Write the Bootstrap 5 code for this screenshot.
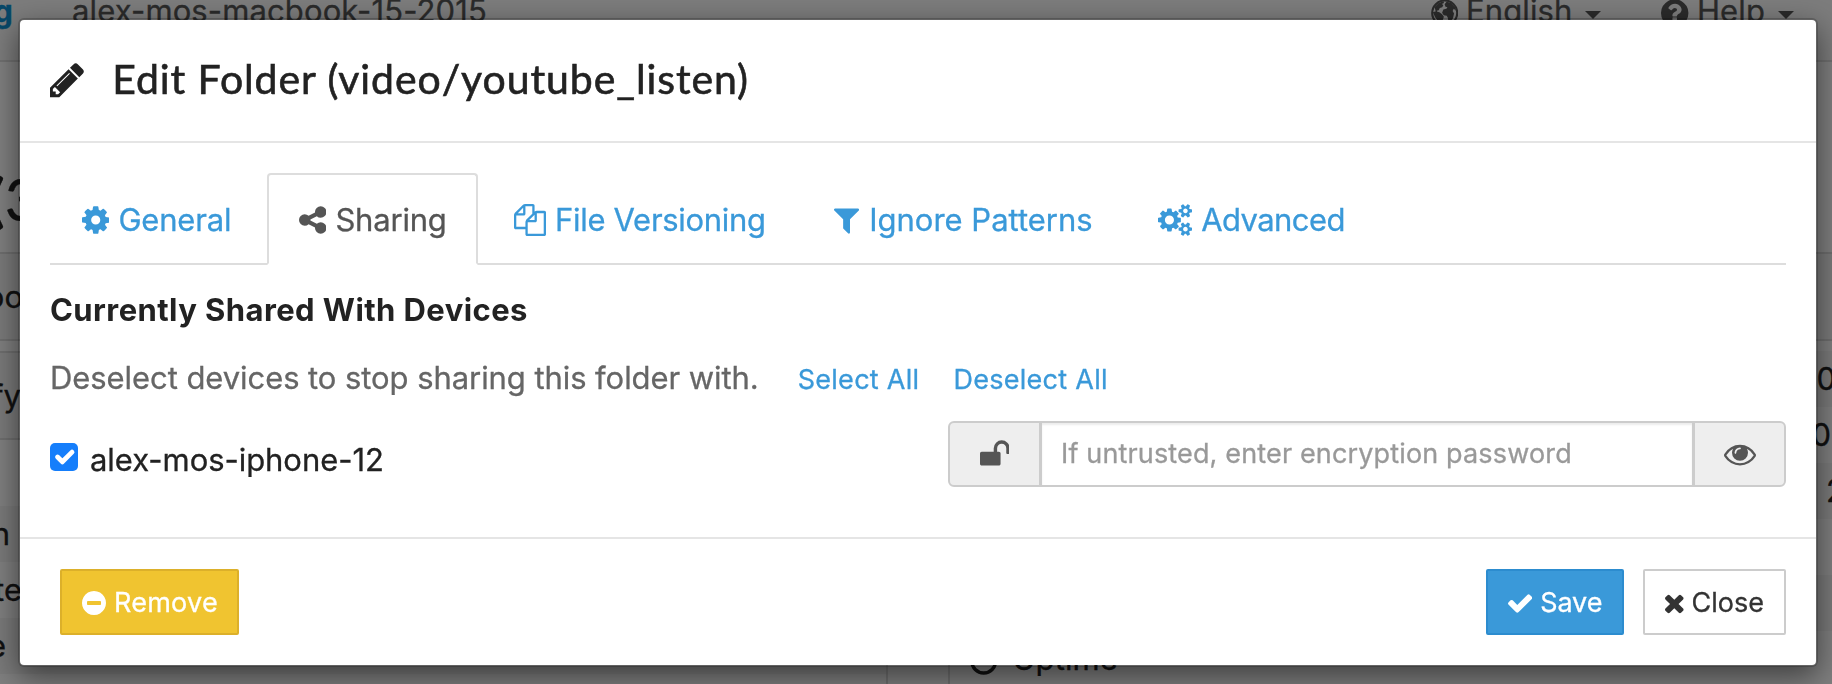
<!DOCTYPE html>
<html lang="en">
<head>
<meta charset="utf-8">
<title>Edit Folder</title>
<link href="https://cdn.jsdelivr.net/npm/bootstrap@5.3.0/dist/css/bootstrap.min.css" rel="stylesheet">
<style>
  :root { --blue: #3a99d9; --ink: #222; }
  body { font: 31px/46px Inter, "Liberation Sans", sans-serif; color: var(--ink); background: #fff; overflow: hidden; height: 684px; -webkit-text-stroke: .3px currentColor; }
  .ico { display: block; height: 32px; fill: currentColor; flex: none; }

  /* page behind the dialog */
  .page { height: 684px; overflow: hidden; }
  .topbar { height: 106px; margin-top: -44px; padding-top: 6px; background: #f8f8f8; border-bottom: 2px solid #e0e0e0; color: #555; white-space: nowrap; letter-spacing: .12px; }
  .caret { border: 8px solid transparent; border-top-color: currentColor; border-bottom: 0; margin: 8px 0 0 13px; }
  .peek { display: flex; justify-content: flex-end; white-space: pre; flex: none; }
  .brand { width: 13px; margin-right: 59px; color: #0d8fd0; font-weight: 700; }
  .menu-lang { margin-right: 60px; }
  .menu-help { margin-right: 38px; }
  .heading { height: 190px; padding-top: 107px; font: 500 57px/60px Lato, sans-serif; }
  .col-left { width: 888px; flex: none; border-right: 2px solid #ddd; }
  .col-right { width: 950px; flex: none; margin-left: 60px; border-left: 2px solid #ddd; }
  .strip { height: 89px; background: #f5f5f5; border: solid #ddd; border-width: 2px 0; padding-top: 20px; }
  .line { height: 56px; padding-top: 5px; white-space: pre; }
  .line.odd { background: #f5f5f5; }

  /* dialog */
  .modal-backdrop { --bs-backdrop-opacity: .5; }
  .modal-dialog { max-width: 1800px; margin: 18px 0 0 18px; }
  .modal-content { border: 2px solid rgba(0,0,0,.2); border-radius: 6px; background-clip: padding-box; box-shadow: 0 10px 30px rgba(0,0,0,.5); color: var(--ink); }
  .modal-header { height: 123px; padding: 28px 30px 33px; border-bottom: 2px solid #e5e5e5; border-radius: 0; justify-content: flex-start; }
  .modal-header .ico { height: 40px; margin-top: 4px; }
  .modal-title { font: 400 41px/60px Lato, sans-serif; letter-spacing: .9px; margin-left: 28px; padding-top: 1px; -webkit-text-stroke: .6px currentColor; }
  .modal-body { padding: 30px 30px 50px; }
  .nav-tabs { border-bottom: 2px solid #ddd; gap: 4px; flex-wrap: nowrap; }
  .nav-tabs .nav-link { display: flex; align-items: center; gap: 9px; height: 92px; padding: 1px 0 0 30px; border-width: 2px; margin-bottom: -2px; border-radius: 4px 4px 0 0; color: var(--blue); white-space: nowrap; letter-spacing: -.2px; }
  .nav-tabs .nav-link.active { color: #555; border-color: #ddd #ddd #fff; }
  .t-general { width: 213px; } .t-sharing { width: 211px; } .t-files { width: 316px; } .t-ignore { width: 320px; } .t-adv { width: 250px; }
  .nav-tabs .t-files .nav-link { letter-spacing: -.3px; }
  .nav-tabs .t-ignore .nav-link { letter-spacing: 0; gap: 10px; }
  .nav-tabs .t-adv .nav-link { letter-spacing: -.6px; }
  .section { font-weight: 700; letter-spacing: .42px; margin: 22px 0 21px; -webkit-text-stroke: 0; }
  .hint-row { height: 46px; padding-top: 1px; }
  .hint { color: #666; letter-spacing: -.07px; }
  .act { color: var(--blue); text-decoration: none; font-size: 27px; letter-spacing: .28px; }
  .dev { margin-top: 21px; height: 66px; }
  .dev .form-check-input { width: 28px; height: 28px; margin: 6px 12px 0 0; border: 0; border-radius: 5px; background-color: #157efb; background-size: 115%; }
  .dev label { letter-spacing: -.05px; }
  .input-group { width: 838px; height: 66px; }
  .input-group-text { width: 93px; justify-content: center; background: #eee; color: #555; border: 2px solid #ccc; border-radius: 6px; padding: 0; }
  .input-group .form-control { font-size: 27px; letter-spacing: .15px; border: 2px solid #ccc; padding: 1px 18px 0 19px; box-shadow: inset 0 2px 2px rgba(0,0,0,.075); }
  .form-control::placeholder { color: #999; }
  .modal-footer { height: 128px; padding: 30px; border-top: 2px solid #e5e5e5; }
  .modal-footer > * { margin: 0; }
  .modal-footer .btn { height: 66px; border-width: 2px; border-radius: 2px; padding: 2px 0 0 20px; display: flex; align-items: center; gap: 8px; font-size: 27px; -webkit-text-stroke: .3px currentColor; }
  .modal-footer .ico { height: 28px; }
  .btn-remove { width: 179px; margin-left: 10px; background: #f0c430; border-color: #dcb02a; color: #fff; letter-spacing: .25px; }
  .btn-save { width: 138px; margin-left: auto; margin-right: 19px; background: var(--blue); border-color: #2c8ccf; color: #fff; letter-spacing: -.1px; }
  .btn-dismiss { width: 143px; background: #fff; border-color: #ccc; color: #333; }
</style>
</head>
<body>

<div class="page">
  <div class="topbar d-flex align-items-center">
    <div class="peek brand">syncthing</div>
    <div class="me-auto">alex-mos-macbook-15-2015</div>
    <div class="d-flex align-items-center menu-lang">
      <svg class="ico mt-1" viewBox="128 0 1536 1792"><circle cx="896" cy="896" r="700" fill="none" stroke="currentColor" stroke-width="120"/><path d="M330 560l230-230 260-90 40 90-130 60 90 60-60 130-140 40-60 120-110 30 60 110-110-20zM230 860l170-60 200 60 150 110 100 130-60 190-90 80-40 200-110 30-60-280-130-190zM1000 260l240 60 230 250 60 200-130-110-60 120 80 150-60 260-150 230-100-10-40-250-60-110-170-30-90-140 70-180 170-40 60-90-110-30-50-140z"/></svg>
      <span class="ms-2">English</span><span class="caret"></span>
    </div>
    <div class="d-flex align-items-center menu-help">
      <svg class="ico mt-1" viewBox="128 0 1536 1792"><path d="M1024 1376v-192q0-14-9-23t-23-9h-192q-14 0-23 9t-9 23v192q0 14 9 23t23 9h192q14 0 23-9t9-23zm256-672q0-88-55.5-163t-138.5-116-170-41q-243 0-371 213-15 24 8 42l132 100q7 6 19 6 16 0 25-12 53-68 86-92 34-24 86-24 48 0 85.5 26t37.5 59q0 38-20 61t-68 45q-63 28-115.5 86.5t-52.5 125.5v36q0 14 9 23t23 9h192q14 0 23-9t9-23q0-19 21.5-49.5t54.5-49.5q32-18 49-28.5t46-35 44.5-48 28-60.5 12.5-81zm384 192q0 209-103 385.5t-279.5 279.5-385.5 103-385.5-103-279.5-279.5-103-385.5 103-385.5 279.5-279.5 385.5-103 385.5 103 279.5 279.5 103 385.5z"/></svg>
      <span class="ms-2">Help</span><span class="caret"></span>
    </div>
  </div>
  <div class="heading"><div class="peek" style="width:38px">(3</div></div>
  <div class="d-flex">
    <div class="col-left">
      <div class="strip"><div class="peek" style="width:23px">oo</div></div>
      <div class="strip" style="margin-top:10px"><div class="peek" style="width:21px">fy</div></div>
      <div class="line" style="height:66px"></div>
      <div class="line odd"><div class="peek" style="width:10px">n</div></div>
      <div class="line"><div class="peek" style="width:22px">te</div></div>
      <div class="line odd"><div class="peek" style="width:6px">e</div></div>
    </div>
    <div class="col-right">
      <div class="strip"></div>
      <div class="line" style="height:10px"></div>
      <div class="line odd"><div class="peek" style="width:886px">0</div></div>
      <div class="line"><div class="peek" style="width:881px">0</div></div>
      <div class="line odd"><div class="peek" style="width:895px">n 2</div></div>
      <div class="line"></div>
      <div class="line odd"></div>
      <div class="line d-flex">
        <svg class="ico" style="margin:9px 15px 0 20px" viewBox="128 0 1536 1792"><circle cx="896" cy="896" r="670" fill="none" stroke="currentColor" stroke-width="190"/><path d="M832 512h128v512H640V896h192z"/></svg>
        <span style="letter-spacing:.1px">Uptime</span>
      </div>
    </div>
  </div>
</div>

<div class="modal-backdrop show"></div>

<div class="modal d-block" tabindex="-1" style="overflow:hidden">
  <div class="modal-dialog">
    <div class="modal-content">
      <div class="modal-header">
        <svg class="ico" viewBox="128 0 1536 1792"><path d="M491 1536l91-91-235-235-91 91v107h128v128h107zm523-928q0-22-22-22-10 0-17 7l-542 542q-7 7-7 17 0 22 22 22 10 0 17-7l542-542q7-7 7-17zm-54-192l416 416-832 832h-416v-416zm683 96q0 53-37 90l-166 166-416-416 166-165q36-38 90-38 53 0 91 38l235 234q37 39 37 91z"/></svg>
        <h4 class="modal-title">Edit Folder (video/youtube_listen)</h4>
      </div>
      <div class="modal-body">
        <ul class="nav nav-tabs">
          <li class="nav-item t-general"><a class="nav-link"><svg class="ico" viewBox="128 0 1536 1792"><path d="M1152 896q0-106-75-181t-181-75-181 75-75 181 75 181 181 75 181-75 75-181zm512-109v222q0 12-8 23t-20 13l-185 28q-19 54-39 91 35 50 107 138 10 12 10 25t-9 23q-27 37-99 108t-94 71q-12 0-26-9l-138-108q-44 23-91 38-16 136-29 186-7 28-36 28h-222q-14 0-24.500-8.500t-11.500-21.500l-28-184q-49-16-90-37l-141 107q-10 9-25 9-14 0-25-11-126-114-165-168-7-10-7-23 0-12 8-23 15-21 51-66.500t54-70.500q-27-50-41-99l-183-27q-13-2-21-12.500t-8-23.500v-222q0-12 8-23t19-13l186-28q14-46 39-92-40-57-107-138-10-12-10-24 0-10 9-23 26-36 98.500-107.500t94.500-71.500q13 0 26 10l138 107q44-23 91-38 16-136 29-186 7-28 36-28h222q14 0 24.500 8.500t11.500 21.500l28 184q49 16 90 37l142-107q9-9 24-9 13 0 25 10 129 119 165 170 7 8 7 22 0 12-8 23-15 21-51 66.500t-54 70.500q26 50 41 98l183 28q13 2 21 12.500t8 23.500z"/></svg>General</a></li>
          <li class="nav-item t-sharing"><a class="nav-link active"><svg class="ico" viewBox="128 0 1536 1792"><path d="M1344 1024q133 0 226.500 93.500t93.500 226.500-93.500 226.500-226.500 93.500-226.500-93.500-93.500-226.500q0-12 2-34l-360-180q-92 86-218 86-133 0-226.500-93.500t-93.500-226.500 93.500-226.500 226.500-93.500q126 0 218 86l360-180q-2-22-2-34 0-133 93.500-226.500t226.500-93.500 226.500 93.500 93.500 226.500-93.500 226.500-226.500 93.500q-126 0-218-86l-360 180q2 22 2 34t-2 34l360 180q92-86 218-86z"/></svg>Sharing</a></li>
          <li class="nav-item t-files"><a class="nav-link"><svg class="ico" viewBox="0 0 1792 1792"><path d="M1696 384q40 0 68 28t28 68v1216q0 40-28 68t-68 28h-960q-40 0-68-28t-28-68v-288h-544q-40 0-68-28t-28-68v-672q0-40 20-88t48-76l408-408q28-28 76-48t88-20h416q40 0 68 28t28 68v328q68-40 128-40h416zm-544 213l-299 299h299v-299zm-640-384l-299 299h299v-299zm196 647l316-316v-416h-384v416q0 40-28 68t-68 28h-416v640h512v-256q0-40 20-88t48-76zm956 804v-1152h-384v416q0 40-28 68t-68 28h-416v640h896z"/></svg>File Versioning</a></li>
          <li class="nav-item t-ignore"><a class="nav-link"><svg class="ico" viewBox="192 0 1408 1792"><path d="M1595 295q17 41-14 70l-493 493v742q0 42-39 59-13 5-25 5-27 0-45-19l-256-256q-19-19-19-45v-486l-493-493q-31-29-14-70 17-39 59-39h1280q42 0 59 39z"/></svg>Ignore Patterns</a></li>
          <li class="nav-item t-adv"><a class="nav-link"><svg class="ico" viewBox="-64 0 1920 1792"><path d="M832 896q0-106-75-181t-181-75-181 75-75 181 75 181 181 75 181-75 75-181zm768 512q0-52-38-90t-90-38-90 38-38 90q0 53 37.500 90.500t90.500 37.500 90.500-37.500 37.500-90.500zm0-1024q0-52-38-90t-90-38-90 38-38 90q0 53 37.500 90.500t90.500 37.500 90.500-37.500 37.500-90.500zm-384 421v185q0 10-7 19.500t-16 10.500l-155 24q-11 35-32 76 34 48 90 115 7 11 7 20 0 12-7 19-23 30-82.500 89.500t-78.500 59.500q-11 0-21-7l-115-90q-37 19-77 31-11 108-23 155-7 24-30 24h-186q-11 0-20-7.500t-10-17.500l-23-153q-34-10-75-31l-118 89q-7 7-20 7-11 0-21-8-144-133-144-160 0-9 7-19 10-14 41-53t47-61q-23-44-35-82l-152-24q-10-1-17-9.500t-7-19.500v-185q0-10 7-19.500t16-10.500l155-24q11-35 32-76-34-48-90-115-7-11-7-20 0-12 7-20 22-30 82-89t79-59q11 0 21 7l115 90q34-18 77-32 11-108 23-154 7-24 30-24h186q11 0 20 7.500t10 17.500l23 153q34 10 75 31l118-89q8-7 20-7 11 0 21 8 144 133 144 160 0 8-7 19-12 16-42 54t-45 60q23 48 34 82l152 23q10 2 17 10.500t7 19.500zm640 533v140q0 16-149 31-12 27-30 52 51 113 51 138 0 4-4 7-122 71-124 71-8 0-46-47t-52-68q-20 2-30 2t-30-2q-14 21-52 68t-46 47q-2 0-124-71-4-3-4-7 0-25 51-138-18-25-30-52-149-15-149-31v-140q0-16 149-31 13-29 30-52-51-113-51-138 0-4 4-7 4-2 35-20t59-34 30-16q8 0 46 46.500t52 67.500q20-2 30-2t30 2q51-71 92-112l6-2q4 0 124 70 4 3 4 7 0 25-51 138 17 23 30 52 149 15 149 31zm0-1024v140q0 16-149 31-12 27-30 52 51 113 51 138 0 4-4 7-122 71-124 71-8 0-46-47t-52-68q-20 2-30 2t-30-2q-14 21-52 68t-46 47q-2 0-124-71-4-3-4-7 0-25 51-138-18-25-30-52-149-15-149-31v-140q0-16 149-31 13-29 30-52-51-113-51-138 0-4 4-7 4-2 35-20t59-34 30-16q8 0 46 46.500t52 67.500q20-2 30-2t30 2q51-71 92-112l6-2q4 0 124 70 4 3 4 7 0 25-51 138 17 23 30 52 149 15 149 31z"/></svg>Advanced</a></li>
        </ul>
        <div class="section">Currently Shared With Devices</div>
        <div class="hint-row d-flex align-items-baseline">
          <span class="hint">Deselect devices to stop sharing this folder with.</span>
          <a class="act" style="margin-left:39px">Select All</a>
          <a class="act" style="margin-left:34px">Deselect All</a>
        </div>
        <div class="dev d-flex justify-content-between">
          <div class="d-flex pt-3">
            <input class="form-check-input" type="checkbox" id="dev1" checked>
            <label for="dev1">alex-mos-iphone-12</label>
          </div>
          <div class="input-group">
            <span class="input-group-text"><svg class="ico" viewBox="64 0 1664 1792"><path d="M1728 576v256q0 26-19 45t-45 19h-64q-26 0-45-19t-19-45v-256q0-106-75-181t-181-75-181 75-75 181v192h96q40 0 68 28t28 68v576q0 40-28 68t-68 28h-960q-40 0-68-28t-28-68v-576q0-40 28-68t68-28h672v-192q0-185 131.500-316.500t316.500-131.500 316.500 131.500 131.500 316.500z"/></svg></span>
            <input class="form-control" type="text" placeholder="If untrusted, enter encryption password">
            <span class="input-group-text"><svg class="ico" viewBox="0 0 1792 1792"><path d="M1664 960q-152-236-381-353 61 104 61 225 0 185-131.500 316.500t-316.500 131.500-316.500-131.500-131.500-316.500q0-121 61-225-229 117-381 353 133 205 333.500 326.500t434.500 121.500 434.500-121.500 333.500-326.500zm-720-384q0-20-14-34t-34-14q-125 0-214.500 89.500t-89.500 214.500q0 20 14 34t34 14 34-14 14-34q0-86 61-147t147-61q20 0 34-14t14-34zm848 384q0 34-20 69-140 230-376.500 368.500t-499.500 138.500-499.500-139-376.500-368q-20-35-20-69t20-69q140-229 376.500-368t499.500-139 499.500 139 376.500 368q20 35 20 69z"/></svg></span>
          </div>
        </div>
      </div>
      <div class="modal-footer">
        <button class="btn btn-remove"><svg class="ico" viewBox="128 0 1536 1792"><path d="M1344 960v-128q0-26-19-45t-45-19h-768q-26 0-45 19t-19 45v128q0 26 19 45t45 19h768q26 0 45-19t19-45zm320-64q0 209-103 385.500t-279.500 279.500-385.500 103-385.500-103-279.500-279.500-103-385.500 103-385.500 279.500-279.500 385.500-103 385.500 103 279.500 279.500 103 385.500z"/></svg>Remove</button>
        <button class="btn btn-save"><svg class="ico" viewBox="121 0 1550 1792"><path d="M1671 566q0 40-28 68l-724 724-136 136q-28 28-68 28t-68-28l-136-136-362-362q-28-28-28-68t28-68l136-136q28-28 68-28t68 28l294 295 656-657q28-28 68-28t68 28l136 136q28 28 28 68z"/></svg>Save</button>
        <button class="btn btn-dismiss"><svg class="ico" viewBox="302 0 1188 1792"><path d="M1490 1322q0 40-28 68l-136 136q-28 28-68 28t-68-28l-294-294-294 294q-28 28-68 28t-68-28l-136-136q-28-28-28-68t28-68l294-294-294-294q-28-28-28-68t28-68l136-136q28-28 68-28t68 28l294 294 294-294q28-28 68-28t68 28l136 136q28 28 28 68t-28 68l-294 294 294 294q28 28 28 68z"/></svg>Close</button>
      </div>
    </div>
  </div>
</div>

<script src="https://cdn.jsdelivr.net/npm/bootstrap@5.3.0/dist/js/bootstrap.bundle.min.js"></script>
</body>
</html>
